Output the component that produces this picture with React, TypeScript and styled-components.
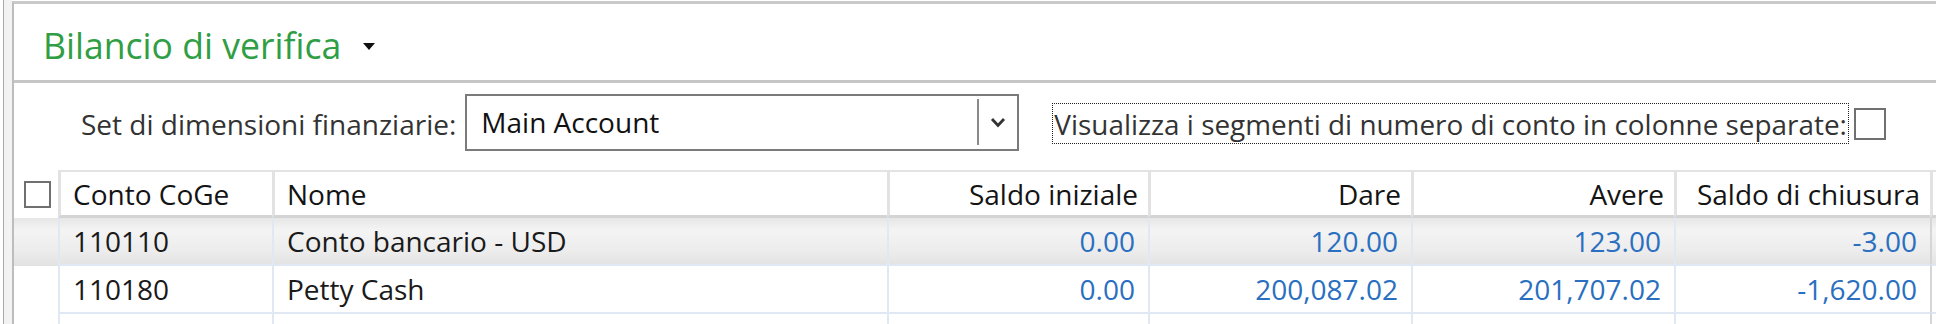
import React from 'react';
import styled, { createGlobalStyle } from 'styled-components';

const Global = createGlobalStyle`
  html, body { margin: 0; padding: 0; background: #fff; }
  body { font-family: "Open Sans", "Noto Sans", sans-serif; }
  #root { width: 1936px; height: 324px; overflow: hidden; }
`;

const Page = styled.div`
  display: flex;
  width: 1936px;
  height: 324px;
  overflow: hidden;
  background: #fff;
`;

const Gutter = styled.div`
  flex: none;
  box-sizing: border-box;
  width: 9px;
  margin-left: 3px;
  border-left: 1px solid #a9a9a9;
  background: #f3f3f3;
`;

const Panel = styled.div`
  flex: 1;
  min-width: 0;
  display: flex;
  flex-direction: column;
  border-left: 2px solid #bdbdbd;
  border-top: 3px solid #c9c9c9;
  margin-top: 1px;
  background: #fff;
`;

const TitleBar = styled.div`
  flex: none;
  height: 79px;
  box-sizing: border-box;
  display: flex;
  align-items: center;
  padding: 7px 0 0 29px;
  border-bottom: 3px solid #c6c6c6;
`;

const Title = styled.h1`
  margin: 0;
  font-size: 35.6px;
  font-weight: 400;
  line-height: 1;
  color: #2f9e44;
`;

const Caret = styled.svg`
  margin-left: 22px;
  margin-top: 2px;
`;

const FilterRow = styled.div`
  flex: none;
  height: 87px;
  box-sizing: border-box;
  display: flex;
  align-items: center;
  padding: 0 0 6px 67px;
`;

const Label = styled.span`
  font-size: 28px;
  color: #333;
  margin-right: 9px;
  white-space: nowrap;
`;

const Combo = styled.div`
  box-sizing: border-box;
  width: 554px;
  height: 57px;
  border: 2px solid #7b7b7b;
  display: flex;
  align-items: center;
  margin-top: -3px;
`;

const ComboValue = styled.span`
  flex: 1;
  padding-left: 14px;
  font-size: 28px;
  color: #111;
`;

const ComboButton = styled.div`
  width: 40px;
  height: 46px;
  box-sizing: border-box;
  border-left: 2px solid #8a8a8a;
  display: flex;
  align-items: center;
  justify-content: center;
`;

const CheckLabel = styled.span`
  margin-left: 33px;
  box-sizing: border-box;
  height: 41px;
  display: flex;
  align-items: center;
  padding: 0 1px;
  border: 1px dotted #222;
  font-size: 27.9px;
  color: #333;
  white-space: nowrap;
`;

const CheckBox = styled.span<{ $size: number; $gap?: number }>`
  display: inline-block;
  box-sizing: border-box;
  width: ${p => p.$size}px;
  height: ${p => p.$size}px;
  margin-left: ${p => p.$gap ?? 0}px;
  border: 2px solid #707070;
  background: #fff;
  flex: none;
`;

const Grid = styled.div`
  flex: 1;
  display: flex;
  flex-direction: column;
  font-size: 28px;
`;

const cols = '44px 214px 615px 261px 263px 263px 256px 1fr';

const HeaderRow = styled.div`
  display: grid;
  grid-template-columns: ${cols};
  height: 48px;
  box-sizing: border-box;
`;

const SelectorCell = styled.div`
  display: flex;
  align-items: center;
  justify-content: center;
  padding-left: 2px;
`;

const HeadCell = styled.div<{ $right?: boolean }>`
  box-sizing: border-box;
  display: flex;
  align-items: center;
  justify-content: ${p => (p.$right ? 'flex-end' : 'flex-start')};
  padding: ${p => (p.$right ? '0 10px 0 0' : '0 0 0 12px')};
  border-top: 2px solid #e3e3e3;
  border-left: 3px solid #e2e2e2;
  border-bottom: 3px solid #d4d4d4;
  color: #141414;
  white-space: nowrap;
  overflow: hidden;
`;

const DataRow = styled.div<{ $selected?: boolean }>`
  display: grid;
  grid-template-columns: ${cols};
  height: 48px;
  box-sizing: border-box;
  background: ${p => (p.$selected ? 'linear-gradient(#e6e6e6, #f4f4f4 25%, #ececec 70%, #e2e2e2)' : '#fff')};
`;

const Blank = styled.div``;

const Cell = styled.div<{ $right?: boolean; $num?: boolean }>`
  box-sizing: border-box;
  display: flex;
  align-items: center;
  justify-content: ${p => (p.$right ? 'flex-end' : 'flex-start')};
  padding: ${p => (p.$right ? '0 13px 0 0' : '0 0 0 13px')};
  border-left: 2px solid #dfe8f3;
  border-bottom: 2px solid #dfe8f3;
  color: ${p => (p.$num ? '#2a6fc0' : '#1a1a1a')};
  white-space: nowrap;
  overflow: hidden;
`;

const EndCell = styled.div`
  border-left: 2px solid #d6d6d6;
  border-bottom: 2px solid #dfe8f3;
`;

type Row = { conto: string; nome: string; si: string; dare: string; avere: string; sc: string; selected?: boolean };

const rows: Row[] = [
  { conto: '110110', nome: 'Conto bancario - USD', si: '0.00', dare: '120.00', avere: '123.00', sc: '-3.00', selected: true },
  { conto: '110180', nome: 'Petty Cash', si: '0.00', dare: '200,087.02', avere: '201,707.02', sc: '-1,620.00' },
  { conto: '', nome: '', si: '', dare: '', avere: '', sc: '' },
];

export default function App() {
  return (
    <>
      <Global />
      <Page>
        <Gutter />
        <Panel>
          <TitleBar>
            <Title>Bilancio di verifica</Title>
            <Caret width="12" height="7" viewBox="0 0 12 7">
              <path d="M0 0 L12 0 L6 7 Z" fill="#111" />
            </Caret>
          </TitleBar>
          <FilterRow>
            <Label>Set di dimensioni finanziarie:</Label>
            <Combo>
              <ComboValue>Main Account</ComboValue>
              <ComboButton>
                <svg width="18" height="12" viewBox="0 0 18 12">
                  <polyline points="3,3 9,9.5 15,3" fill="none" stroke="#333" strokeWidth="2.8" />
                </svg>
              </ComboButton>
            </Combo>
            <CheckLabel>Visualizza i segmenti di numero di conto in colonne separate:</CheckLabel>
            <CheckBox $size={32} $gap={5} />
          </FilterRow>
          <Grid>
            <HeaderRow>
              <SelectorCell>
                <CheckBox $size={27} />
              </SelectorCell>
              <HeadCell>Conto CoGe</HeadCell>
              <HeadCell>Nome</HeadCell>
              <HeadCell $right>Saldo iniziale</HeadCell>
              <HeadCell $right>Dare</HeadCell>
              <HeadCell $right>Avere</HeadCell>
              <HeadCell $right>Saldo di chiusura</HeadCell>
              <HeadCell />
            </HeaderRow>
            {rows.map((r, i) => (
              <DataRow key={i} $selected={r.selected}>
                <Blank />
                <Cell>{r.conto}</Cell>
                <Cell>{r.nome}</Cell>
                <Cell $right $num>{r.si}</Cell>
                <Cell $right $num>{r.dare}</Cell>
                <Cell $right $num>{r.avere}</Cell>
                <Cell $right $num>{r.sc}</Cell>
                <EndCell />
              </DataRow>
            ))}
          </Grid>
        </Panel>
      </Page>
    </>
  );
}
